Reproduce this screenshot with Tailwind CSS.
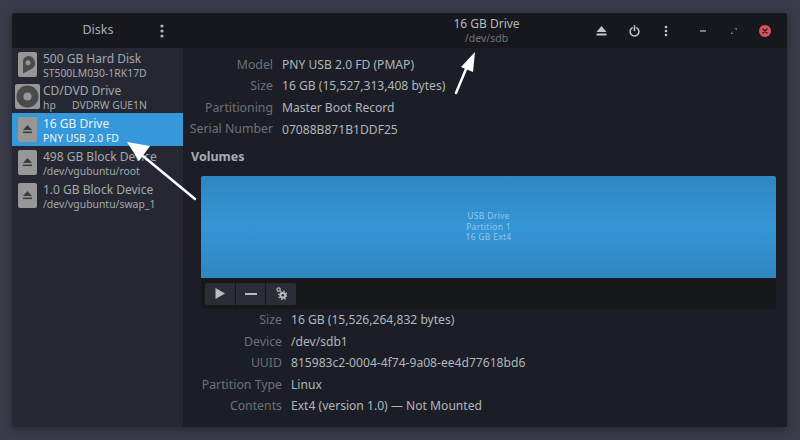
<!DOCTYPE html>
<html lang="en">
<head>
  <meta charset="UTF-8">
  <title>Disks</title>
  <script src="https://cdn.jsdelivr.net/npm/@tailwindcss/browser@4"></script>
</head>
<body class="relative w-[800px] h-[440px] overflow-hidden bg-[#3a3b49] pt-[13px] pl-[12px] font-['Noto_Sans',sans-serif] text-[12px]">

  <!-- window -->
  <div class="w-[775px] h-[414px] flex flex-col rounded-t-[3px] bg-[#1b1e26] shadow-[0_2px_8px_rgba(0,0,0,0.35)] overflow-hidden">

    <!-- header -->
    <div class="h-[35px] shrink-0 flex bg-[#16181d] text-[#b4b8bf]">
      <div class="w-[172px] shrink-0 flex items-center">
        <div class="w-[147px] pl-[25px] text-center text-[12.5px] text-[#a9adb4]">Disks</div>
        <svg width="6" height="14" viewBox="0 0 6 14"><circle cx="3" cy="2" r="1.6" fill="#aeb2b8"/><circle cx="3" cy="7" r="1.6" fill="#aeb2b8"/><circle cx="3" cy="12" r="1.6" fill="#aeb2b8"/></svg>
      </div>
      <div class="flex-1 flex items-center">
        <div class="w-[229px] ml-[188px] flex flex-col items-center leading-[14px] pt-[1px]">
          <span class="text-[12px] text-[#b4b8bf]">16 GB Drive</span>
          <span class="text-[10.5px] text-[#6f747c]">/dev/sdb</span>
        </div>
        <div class="ml-[-5px] flex items-center">
          <svg width="11" height="10" viewBox="0 0 11 10"><path d="M5.5 0 L10.5 6 H0.5 Z" fill="#c3c6cb"/><rect x="0.5" y="7.5" width="10" height="2" fill="#c3c6cb"/></svg>
          <svg class="ml-[22px]" width="11" height="12" viewBox="0 0 11 12" fill="none" stroke="#c3c6cb" stroke-width="1.5" stroke-linecap="round"><path d="M3.2 2.8 A4.4 4.4 0 1 0 7.8 2.8"/><path d="M5.5 0.8 V5.5"/></svg>
          <svg class="ml-[24px]" width="4" height="12" viewBox="0 0 4 12"><circle cx="2" cy="2" r="1.3" fill="#c3c6cb"/><circle cx="2" cy="6" r="1.3" fill="#c3c6cb"/><circle cx="2" cy="10" r="1.3" fill="#c3c6cb"/></svg>
          <div class="ml-[32px] w-[6px] h-[2px] bg-[#7b7f85]"></div>
          <svg class="ml-[25px]" width="6" height="6" viewBox="0 0 6 6"><path d="M3.4 0 H6 V2.6 Z M0 3.4 V6 H2.6 Z" fill="#70747a"/></svg>
          <div class="ml-[22px] w-[12px] h-[12px] rounded-full bg-[#d9535b] flex items-center justify-center">
            <svg width="6" height="6" viewBox="0 0 6 6" stroke="#2a1a1e" stroke-width="1.4" stroke-linecap="round"><path d="M1 1 L5 5 M5 1 L1 5"/></svg>
          </div>
        </div>
      </div>
    </div>

    <div class="flex-1 flex min-h-0">
      <!-- sidebar -->
      <div class="w-[172px] shrink-0 bg-[#252832] border-r border-[#1a1c22]">

        <div class="h-[32px] flex items-center text-[#a4a8ae]">
          <svg class="ml-[6px] shrink-0" width="19" height="25" viewBox="0 0 19 25"><rect width="19" height="25" rx="2" fill="#979797"/><path fill-rule="evenodd" d="M10 4 a7 7 0 0 1 3.6 13 L5 21.5 V10 a6 6 0 0 1 5 -6 Z M10 8.3 a2.5 2.5 0 1 0 0.01 0 Z" fill="#4a4a4a"/></svg>
          <div class="ml-[6px] pt-[3px] leading-[14px]">
            <div class="text-[12px]">500 GB Hard Disk</div>
            <div class="text-[10.4px]">ST500LM030-1RK17D</div>
          </div>
        </div>

        <div class="h-[33px] flex items-center text-[#a4a8ae]">
          <svg class="ml-[3px] shrink-0" width="25" height="25" viewBox="0 0 25 25"><rect width="25" height="25" rx="2" fill="#979797"/><circle cx="12.5" cy="12.5" r="11" fill="#4a4a4a"/><circle cx="12.5" cy="12.5" r="4" fill="#979797"/></svg>
          <div class="ml-[3px] pt-[3px] leading-[14px]">
            <div class="text-[12px]">CD/DVD Drive</div>
            <div class="text-[10.4px] whitespace-pre">hp      DVDRW GUE1N</div>
          </div>
        </div>

        <div class="h-[33px] flex items-center bg-[#3498db] text-[#eef4f9]">
          <svg class="ml-[6px] shrink-0" width="19" height="25" viewBox="0 0 19 25"><rect width="19" height="25" rx="2" fill="#979797"/><path d="M9.5 8 L14 13 H5 Z" fill="#3d3d3d"/><rect x="5" y="14.5" width="9" height="1.6" fill="#3d3d3d"/></svg>
          <div class="ml-[6px] pt-[3px] leading-[14px]">
            <div class="text-[12px]">16 GB Drive</div>
            <div class="text-[10.4px]">PNY USB 2.0 FD</div>
          </div>
        </div>

        <div class="h-[33px] flex items-center text-[#a4a8ae]">
          <svg class="ml-[6px] shrink-0" width="19" height="25" viewBox="0 0 19 25"><rect width="19" height="25" rx="2" fill="#979797"/><path d="M9.5 8 L14 13 H5 Z" fill="#3d3d3d"/><rect x="5" y="14.5" width="9" height="1.6" fill="#3d3d3d"/></svg>
          <div class="ml-[6px] pt-[3px] leading-[14px]">
            <div class="text-[12px]">498 GB Block Device</div>
            <div class="text-[10.4px]">/dev/vgubuntu/root</div>
          </div>
        </div>

        <div class="h-[33px] flex items-center text-[#a4a8ae]">
          <svg class="ml-[6px] shrink-0" width="19" height="25" viewBox="0 0 19 25"><rect width="19" height="25" rx="2" fill="#979797"/><path d="M9.5 8 L14 13 H5 Z" fill="#3d3d3d"/><rect x="5" y="14.5" width="9" height="1.6" fill="#3d3d3d"/></svg>
          <div class="ml-[6px] pt-[3px] leading-[14px]">
            <div class="text-[12px]">1.0 GB Block Device</div>
            <div class="text-[10.4px]">/dev/vgubuntu/swap_1</div>
          </div>
        </div>
      </div>

      <!-- main -->
      <div class="flex-1 min-w-0 pt-[6px]">
        <div class="grid grid-cols-[89px_1fr] gap-x-[9px] auto-rows-[21.6px] items-center text-[12.1px]">
          <div class="text-right text-[12.3px] text-[#6d7178]">Model</div><div class="text-[#b2b6bc]">PNY USB 2.0 FD (PMAP)</div>
          <div class="text-right text-[12.3px] text-[#6d7178]">Size</div><div class="text-[#b2b6bc]">16 GB (15,527,313,408 bytes)</div>
          <div class="text-right text-[12.3px] text-[#6d7178]">Partitioning</div><div class="text-[#b2b6bc]">Master Boot Record</div>
          <div class="text-right text-[12.3px] text-[#6d7178]">Serial Number</div><div class="text-[#b2b6bc]">07088B871B1DDF25</div>
        </div>

        <div class="mt-[9px] ml-[7px] text-[12.5px] font-bold text-[#a9adb3] leading-[16px]">Volumes</div>

        <div class="mt-[11px] ml-[17px] w-[575px] bg-[#16181c] rounded-b-[2px]">
          <div class="h-[102px] rounded-t-[2px] bg-[linear-gradient(180deg,#3086c0,#3496d6_50%,#2f86c0)] flex flex-col items-center justify-center text-[8.5px] leading-[10.4px] text-[#93c5e6] tracking-[0.3px] pb-[1px]">
            <div>USB Drive</div>
            <div>Partition 1</div>
            <div>16 GB Ext4</div>
          </div>
          <div class="h-[31px] flex items-center pl-[4px]">
            <div class="flex h-[22px] rounded-[2px] bg-[#2a2d34] divide-x divide-[#16181c]">
              <div class="w-[31px] flex items-center justify-center">
                <svg width="10" height="11" viewBox="0 0 10 11"><path d="M0.5 0 L10 5.5 L0.5 11 Z" fill="#b9bcc1"/></svg>
              </div>
              <div class="w-[30px] flex items-center justify-center">
                <div class="w-[12px] h-[2px] bg-[#b9bcc1]"></div>
              </div>
              <div class="w-[30px] flex items-center justify-center">
                <svg width="11" height="13" viewBox="0 0 11 13"><circle cx="2.6" cy="2.6" r="1.7" fill="none" stroke="#b9bcc1" stroke-width="1.2"/><circle cx="6.8" cy="8.3" r="3.4" fill="#b9bcc1"/><circle cx="6.8" cy="8.3" r="4.1" fill="none" stroke="#b9bcc1" stroke-width="1.3" stroke-dasharray="1.6 1.6"/><circle cx="6.8" cy="8.3" r="1.3" fill="#2a2d34"/></svg>
              </div>
            </div>
          </div>
        </div>

        <div class="mt-[0px] grid grid-cols-[98px_1fr] gap-x-[9px] auto-rows-[21.6px] items-center text-[12.1px]">
          <div class="text-right text-[12.3px] text-[#6d7178]">Size</div><div class="text-[#b2b6bc]">16 GB (15,526,264,832 bytes)</div>
          <div class="text-right text-[12.3px] text-[#6d7178]">Device</div><div class="text-[#b2b6bc]">/dev/sdb1</div>
          <div class="text-right text-[12.3px] text-[#6d7178]">UUID</div><div class="text-[#b2b6bc]">815983c2-0004-4f74-9a08-ee4d77618bd6</div>
          <div class="text-right text-[12.3px] text-[#6d7178]">Partition Type</div><div class="text-[#b2b6bc]">Linux</div>
          <div class="text-right text-[12.3px] text-[#6d7178]">Contents</div><div class="text-[#b2b6bc]">Ext4 (version 1.0) — Not Mounted</div>
        </div>
      </div>
    </div>
  </div>

  <!-- annotation arrows -->
  <svg class="absolute left-0 top-0 pointer-events-none" width="800" height="440" viewBox="0 0 800 440">
    <path d="M195 199 L143 156" stroke="#fff" stroke-width="2.5" stroke-linecap="round"/>
    <path d="M127 142 L150 146 L139 161 Z" fill="#fff"/>
    <path d="M456 93 L466 69" stroke="#fff" stroke-width="2.5" stroke-linecap="round"/>
    <path d="M475 52 L473 72 L461 67 Z" fill="#fff"/>
  </svg>
</body>
</html>
